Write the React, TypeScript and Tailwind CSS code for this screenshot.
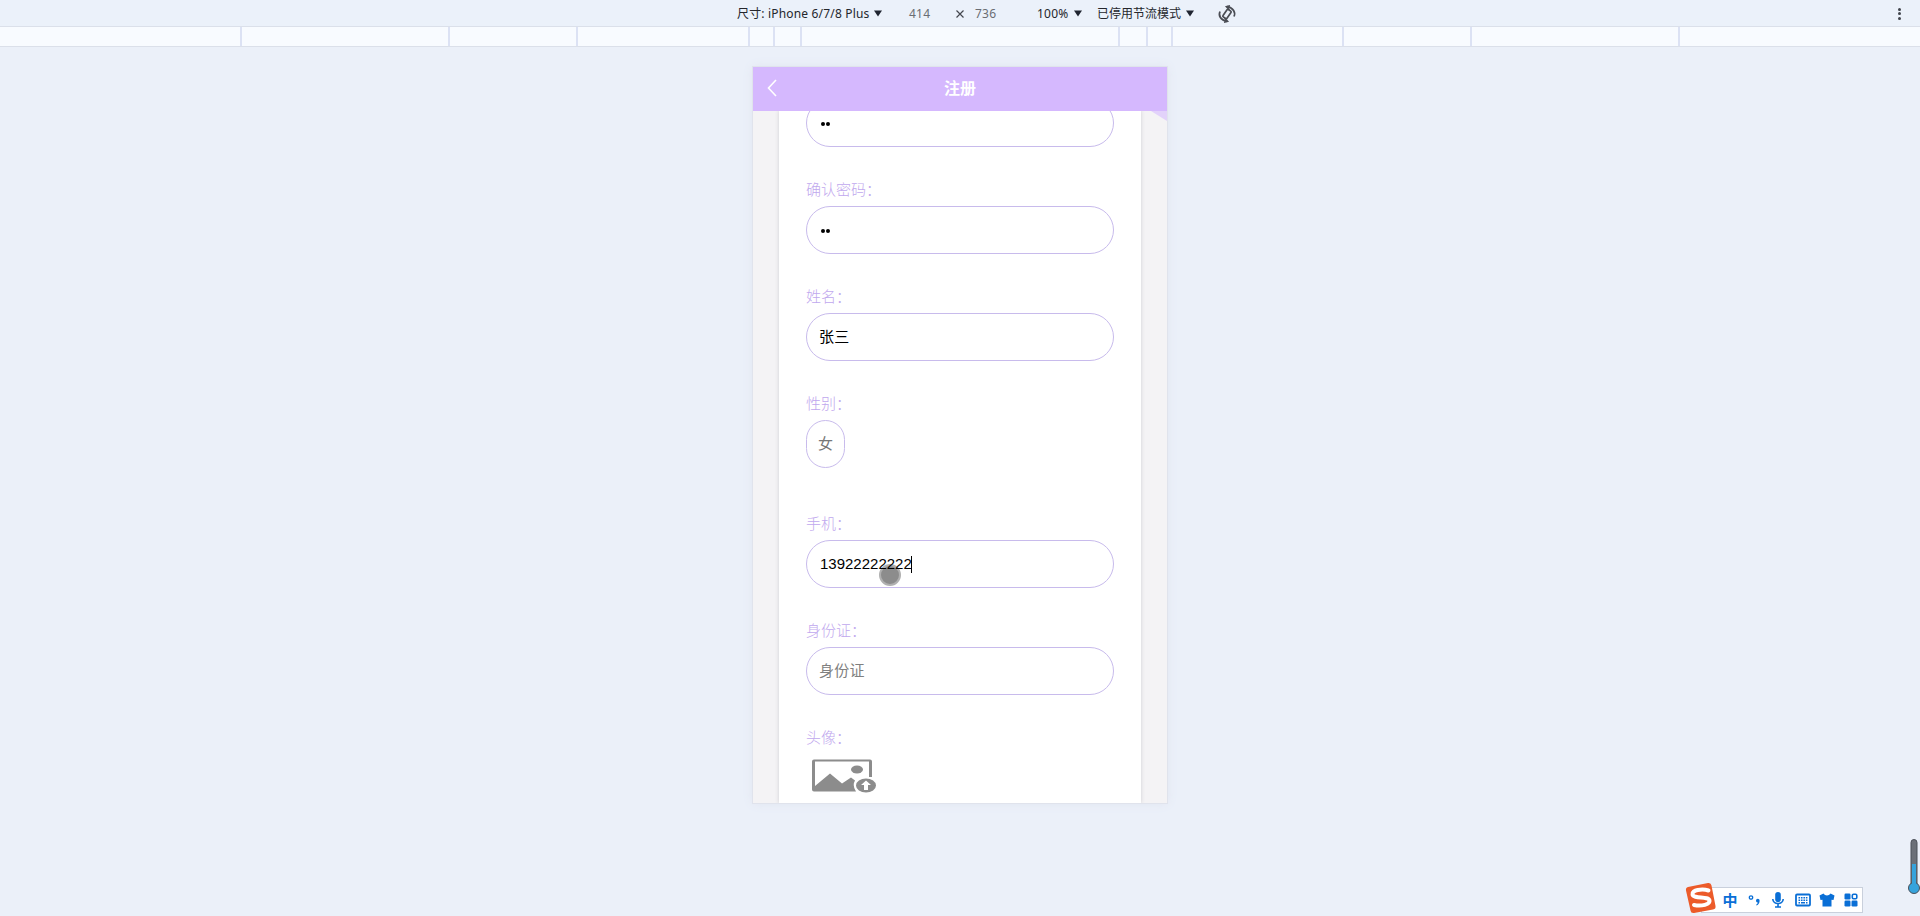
import React from "react";
import { clsx } from "clsx";

const RULER_TICKS = [240, 448, 576, 748, 773, 800, 1118, 1146, 1171, 1342, 1470, 1678];

function Caret() {
  return (
    <svg viewBox="0 0 8 7" className="h-[7px] w-2 fill-[#1f2430]">
      <path d="M0 0.5h8L4 6.5z" />
    </svg>
  );
}

function RotateIcon() {
  return (
    <svg viewBox="0 0 20 20" className="size-5 fill-none stroke-[#4a4d54]" strokeWidth="1.7">
      <rect x="7.6" y="5.5" width="4.8" height="9" rx="1" transform="rotate(35 10 10)" />
      <path d="M3 7.500C1.200 11.500 3.500 16.300 10 17.300M17 12.500C18.800 8.500 16.500 3.700 10 2.700" />
      <path d="M7.800 14.300l2.700 3-3.500 1M12.200 5.700l-2.700-3 3.500-1" />
    </svg>
  );
}

function DeviceToolbar() {
  return (
    <div className="flex h-[26px] items-center bg-[#ebf1fa] pl-[737px] pt-px font-['Noto_Sans','Noto_Sans_CJK_SC',sans-serif] text-[12px] text-[#24262c]">
      <div className="flex w-[172px] items-center gap-1 whitespace-nowrap">
        <span className="w-[133px] tracking-[0.17px]">尺寸: iPhone 6/7/8 Plus</span>
        <Caret />
      </div>
      <span className="w-[46px] tracking-[0.2px] text-[#6a6d73]">414</span>
      <svg viewBox="0 0 8 8" className="ml-px mr-[11px] size-2 stroke-[#44474e]" strokeWidth="1.2">
        <path d="M0.5 0.5l7 7M7.5 0.5l-7 7" />
      </svg>
      <span className="w-[62px] tracking-[0.2px] text-[#6a6d73]">736</span>
      <div className="flex w-[60px] items-center gap-[5px]">
        <span className="w-8 tracking-[0.2px]">100%</span>
        <Caret />
      </div>
      <div className="flex w-[120px] items-center gap-[5px] whitespace-nowrap">
        <span>已停用节流模式</span>
        <Caret />
      </div>
      <RotateIcon />
      <div className="ml-auto flex w-[42px] flex-col items-center gap-[1.5px]">
        <i className="size-[3px] rounded-full bg-[#3f434b]" />
        <i className="size-[3px] rounded-full bg-[#3f434b]" />
        <i className="size-[3px] rounded-full bg-[#3f434b]" />
      </div>
    </div>
  );
}

function Ruler() {
  return (
    <div className="relative h-[21px] border-y border-[#dbe0ea] bg-[#f8fbff]">
      {RULER_TICKS.map((x) => (
        <i key={x} className="absolute top-0 h-full w-[2px] bg-[#dce2f4]" style={{ left: x }} />
      ))}
    </div>
  );
}

interface FieldProps {
  label: string;
  children: React.ReactNode;
  className?: string;
}

function Field({ label, children, className }: FieldProps) {
  return (
    <div className={clsx("flex flex-col items-start", className)}>
      <label className="mb-[5px] h-[22px] text-[15px] font-light leading-[22px] text-[#bfa8ee]">{label}</label>
      {children}
    </div>
  );
}

function InputBox({ children, className }: { children: React.ReactNode; className?: string }) {
  return (
    <div
      className={clsx(
        "flex h-12 shrink-0 items-center rounded-[24px] border border-[#c8bbec] bg-white text-[15px] text-black",
        className ?? "w-full pl-3"
      )}
    >
      {children}
    </div>
  );
}

function Dots() {
  return (
    <span className="flex gap-[1px] pl-[2px] pt-[2px]">
      <i className="size-1 rounded-full bg-black" />
      <i className="size-1 rounded-full bg-black" />
    </span>
  );
}

function UploadIcon() {
  return (
    <svg viewBox="0 0 64 34" className="ml-1.5 mt-[5px] h-[34px] w-16" fill="#8c8c8c">
      <path
        fillRule="evenodd"
        d="M2 0.500h56q2 0 2 2V18h-3V2.500H3V27L18 14.500l12 10 9-6 4 3q-3 5 1 11H2q-2 0-2-2V2.500q0-2 2-2z"
      />
      <ellipse cx="45" cy="10.500" rx="6" ry="4" />
      <ellipse cx="54" cy="26.500" rx="10" ry="7" />
      <path fill="#fff" d="M54 21.500l5 4.500h-3v5h-4v-5h-3z" />
    </svg>
  );
}

function Phone() {
  return (
    <div className="mx-auto mt-5 h-[736px] w-[414px] overflow-hidden bg-[#f4f3f5] shadow-[0_0_0_1px_#e0e3ec,0_0_10px_#dfe3ef]">
      <header className="relative flex h-11 items-center justify-center bg-[#d5b8fe] text-white">
        <svg viewBox="0 0 10 18" className="absolute left-[14px] top-3 h-[18px] w-[10px] fill-none stroke-white" strokeWidth="1.6">
          <path d="M9 1L1.500 9L9 17" />
        </svg>
        <h1 className="text-[16px] font-bold">注册</h1>
        <svg viewBox="0 0 16 10" className="absolute right-0 top-full h-[10px] w-4 fill-[#e2d2fa]">
          <path d="M0 0h16v10z" />
        </svg>
      </header>
      <main className="mx-[26px] h-[692px] overflow-hidden bg-white px-[27px] shadow-[0_0_4px_#cfcdd3]">
        <InputBox className="-mt-3 w-full pl-3">
          <Dots />
        </InputBox>
        <Field label="确认密码：" className="mt-8">
          <InputBox>
            <Dots />
          </InputBox>
        </Field>
        <Field label="姓名：" className="mt-8">
          <InputBox>
            <span className="tracking-[0.3px]">张三</span>
          </InputBox>
        </Field>
        <Field label="性别：" className="mt-8">
          <InputBox className="w-[39px] justify-center">
            <span className="pt-px text-[#777]">女</span>
          </InputBox>
        </Field>
        <Field label="手机：" className="mt-[45px]">
          <InputBox>
            <span className="relative flex items-center pt-px">
              {/* touch pointer */}
              <i className="absolute left-[60px] top-3 size-[22px] rounded-full border-2 border-[#b0b0b0] bg-[#8c8c8c]" />
              <span className="relative pl-[1px]">13922222222</span>
              <i className="relative -ml-px h-[17px] w-px bg-black" />
            </span>
          </InputBox>
        </Field>
        <Field label="身份证：" className="mt-8">
          <InputBox>
            <span className="tracking-[0.2px] text-[#808080]">身份证</span>
          </InputBox>
        </Field>
        <Field label="头像：" className="mt-8">
          <UploadIcon />
        </Field>
      </main>
    </div>
  );
}

function ImeBar() {
  return (
    <div className="absolute left-[1685px] top-[882px] flex h-8 items-center">
      <svg viewBox="0 0 32 32" className="relative z-10 size-8 shrink-0">
        <path d="M3 5L23 1q3-.5 3.500 2.500L30.500 24q.5 3-2.500 3.500L9 31q-3 .5-3.500-2.500L1 8.500Q.5 5.500 3 5z" fill="#ec5b2a" />
        <path d="M23.500 8.500C17 6.500 6.500 8 7.500 12.500c1 4.500 16 1.500 17 6 .8 4-8 6-15.500 4.500" fill="none" stroke="#fff" strokeWidth="4" strokeLinecap="round" />
      </svg>
      <div className="-ml-4 mt-1 flex h-[26px] w-[162px] items-center gap-2 border border-[#c9d0dc] bg-white pl-5 text-[#0a6fd6]">
        <span className="w-4 text-center font-['Noto_Sans_CJK_SC',sans-serif] text-[15px] font-bold leading-4">中</span>
        <svg viewBox="0 0 16 16" className="size-4" fill="currentColor">
          <circle cx="5" cy="5.500" r="1.700" fill="none" stroke="currentColor" strokeWidth="1.300" />
          <path d="M10 8.500a1.800 1.800 0 1 1 3.600 0c0 2.500-1 4-3 5l-.5-.8c1-.6 1.500-1.300 1.600-2.200-1 0-1.700-.8-1.700-2z" />
        </svg>
        <svg viewBox="0 0 16 16" className="size-4" fill="currentColor">
          <rect x="5.200" y="0" width="5.600" height="10" rx="2.800" />
          <path d="M2.800 7c0 6 10.400 6 10.400 0M8 11.500v3M5 15h6" fill="none" stroke="currentColor" strokeWidth="1.600" />
        </svg>
        <svg viewBox="0 0 16 16" className="ml-px size-4" fill="none" stroke="currentColor">
          <rect x="1" y="2.500" width="14" height="11" rx="1" strokeWidth="1.800" />
          <path d="M3.500 5.700h9M3.500 8.200h9" strokeWidth="1.600" strokeDasharray="1.600 0.850" />
          <path d="M3.500 10.800h1.500M6 10.800h4M11 10.800h1.500" strokeWidth="1.500" />
        </svg>
        <svg viewBox="0 0 16 16" className="size-4" fill="currentColor">
          <path d="M4.500 1.500C6 4 10 4 11.500 1.500L15.500 3.500 14.500 8l-2-.3V14.500h-9V7.700l-2 .3L.5 3.500z" />
        </svg>
        <svg viewBox="0 0 16 16" className="size-4" fill="currentColor">
          <rect x="1.500" y="1.500" width="6" height="6" rx="1.200" />
          <rect x="1.500" y="8.500" width="6" height="6" rx="1.200" />
          <rect x="8.500" y="8.500" width="6" height="6" rx="1.200" />
          <rect x="9.300" y="2.300" width="4.500" height="4.500" rx="1.200" fill="none" stroke="currentColor" strokeWidth="1.600" />
        </svg>
      </div>
    </div>
  );
}

function Thermometer() {
  return (
    <svg viewBox="0 0 12 56" className="absolute right-0 top-[839px] h-14 w-3">
      <rect x="3" y="0.500" width="6" height="48" rx="3" fill="#6b7078" stroke="#4b5059" />
      <circle cx="6" cy="49" r="5.500" fill="#36a3dc" stroke="#4b5059" />
      <rect x="4" y="25" width="4" height="22" fill="#36a3dc" />
    </svg>
  );
}

export default function App() {
  return (
    <div className="relative h-[916px] w-[1920px] overflow-hidden bg-[#ebf0f9] font-['Liberation_Sans','Noto_Sans_CJK_SC',sans-serif]">
      <DeviceToolbar />
      <Ruler />
      <Phone />
      <ImeBar />
      <Thermometer />
    </div>
  );
}
